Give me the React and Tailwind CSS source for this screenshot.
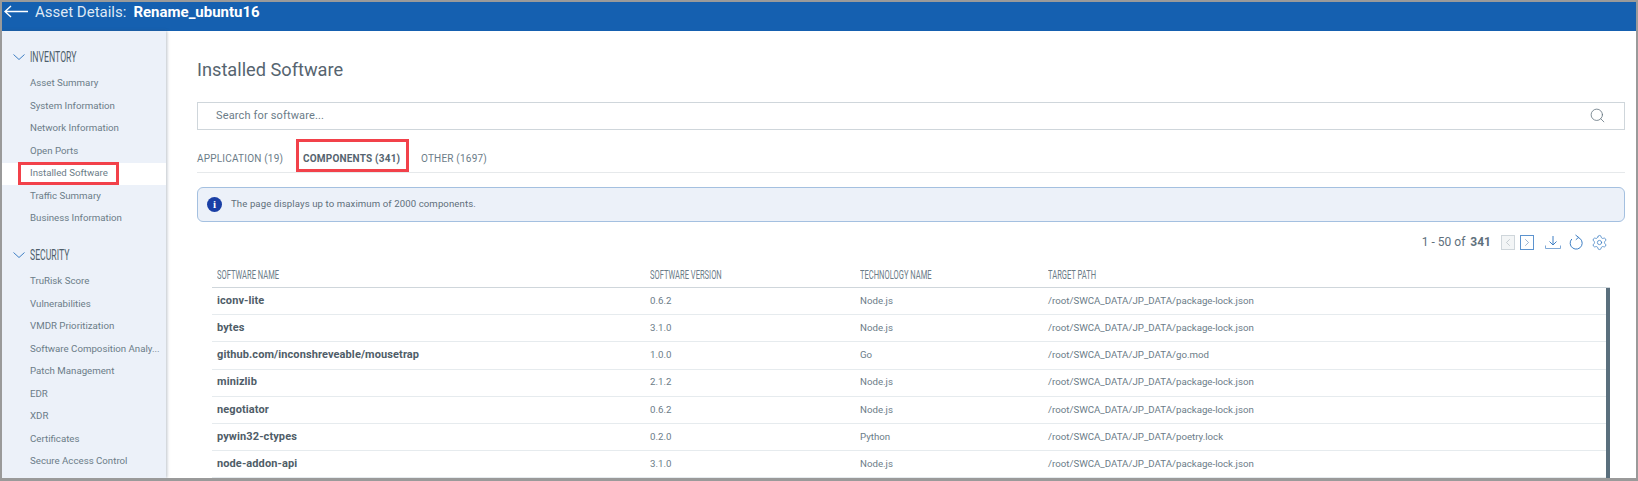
import React from "react";
import { Search, Settings, ChevronLeft, ChevronRight } from "lucide-react";

const inventory = ["Asset Summary","System Information","Network Information","Open Ports","Installed Software","Traffic Summary","Business Information"];
const security = ["TruRisk Score","Vulnerabilities","VMDR Prioritization","Software Composition Analy...","Patch Management","EDR","XDR","Certificates","Secure Access Control"];
const P = "/root/SWCA_DATA/JP_DATA/";
const rows = [
  ["iconv-lite","0.6.2","Node.js",P+"package-lock.json"],
  ["bytes","3.1.0","Node.js",P+"package-lock.json"],
  ["github.com/inconshreveable/mousetrap","1.0.0","Go",P+"go.mod"],
  ["minizlib","2.1.2","Node.js",P+"package-lock.json"],
  ["negotiator","0.6.2","Node.js",P+"package-lock.json"],
  ["pywin32-ctypes","0.2.0","Python",P+"poetry.lock"],
  ["node-addon-api","3.1.0","Node.js",P+"package-lock.json"],
];

function Section({ title, items, className }) {
  return (
    <div className={className}>
      <div className="flex items-center h-[16px] pl-[9px]">
        <svg width="16" height="16" viewBox="0 0 16 16" fill="none" stroke="#3f7fc4" strokeWidth="1"><path d="M2.5 5.5 8 10.5 13.5 5.5" /></svg>
        <span className="ml-[3px] text-[14px] leading-[16px] text-[#4f5f6b] inline-block origin-left scale-x-[0.62] whitespace-nowrap">{title}</span>
      </div>
      <div className="mt-[7.5px]">
        {items.map((t) => (
          <div key={t} className={"relative h-[22.5px] flex items-center pl-[28px] text-[9.7px] text-[#6b7c88] whitespace-nowrap " + (t === "Installed Software" ? "bg-white w-[164px]" : "")}>
            {t}
            {t === "Installed Software" && <div className="absolute left-[16px] -top-[1px] w-[101px] h-[23px] border-[3px] border-[#f2414a]" />}
          </div>
        ))}
      </div>
    </div>
  );
}

const cols = "grid grid-cols-[433px_210px_188px_1fr] pl-[5px]";

export default function App() {
  return (
    <div className="h-[481px] w-[1638px] overflow-hidden bg-white border-t-2 border-l-2 border-r-2 border-b-[3px] border-[#9a9a9a] flex flex-col font-['Roboto',sans-serif]">
      <header className="h-[29px] shrink-0 bg-[#1560b0] flex items-center text-white">
        <svg className="ml-[2px] -mt-[9px]" width="24" height="14" viewBox="0 0 24 14" fill="none" stroke="#fff" strokeWidth="1.4"><path d="M24 6.5H1M7 1 1 6.5 7 12" /></svg>
        <span className="ml-[7px] -mt-[8px] text-[15px] text-[#dfe9f5]">Asset Details:</span>
        <span className="ml-[7px] -mt-[8px] text-[15px] font-bold">Rename_ubuntu16</span>
      </header>
      <div className="flex flex-1 min-h-0">
        <aside className="w-[164px] shrink-0 bg-[#ecf1f9] pt-[18px] shadow-[1px_0_3px_rgba(60,80,100,0.35)] overflow-hidden">
          <Section title="INVENTORY" items={inventory} />
          <Section title="SECURITY" items={security} className="mt-[17px]" />
        </aside>
        <main className="flex-1 min-w-0 pl-[31px] pr-[11px] text-[#6b7c88]">
          <h1 className="mt-[28px] text-[18.2px] leading-[22px] text-[#56646f] font-normal">Installed Software</h1>
          <div className="mt-[21px] h-[28px] border border-[#cfd6db] flex items-center justify-between pl-[18px] pr-[18px]">
            <span className="text-[11px] tracking-[0.15px] text-[#6b7c88] pt-[1px]">Search for software...</span>
            <Search size={17} strokeWidth={1.1} color="#5f707c" className="-mt-[1px]" />
          </div>
          <div className="mt-[10px] h-[33px] border-b border-[#e6e9eb] flex text-[10px] tracking-[0.2px]">
            <div className="pt-[11px] w-[86px] whitespace-nowrap">APPLICATION (19)</div>
            <div className="relative ml-[20px] w-[98px] pt-[11px] font-bold text-[#56646f] whitespace-nowrap">
              COMPONENTS (341)
              <div className="absolute left-0 right-0 bottom-[1px] h-[2px] bg-[#1b4b99]" />
              <div className="absolute -left-[7px] -top-[1px] w-[113px] h-[33px] border-[3px] border-[#f2414a]" />
            </div>
            <div className="ml-[20px] pt-[11px] whitespace-nowrap">OTHER (1697)</div>
          </div>
          <div className="mt-[14px] h-[35px] rounded-[6px] border border-[#a4c0e0] bg-[#ecf1f9] flex items-center pl-[9px] text-[9.6px] tracking-[0.1px] text-[#5f6f7b]">
            <span className="w-[15px] h-[15px] rounded-full bg-[#1a3fa5] text-white text-[11px] font-bold flex items-center justify-center font-['Liberation_Serif',serif]">i</span>
            <span className="ml-[9px]">The page displays up to maximum of 2000 components.</span>
          </div>
          <div className="mt-[11px] h-[18px] flex items-center justify-end pr-[17px] text-[12px] text-[#5f707c]">
            <span>1 - 50 of</span>
            <span className="ml-[5px] font-bold">341</span>
            <span className="ml-[10px] w-[14px] h-[15px] border-[1.5px] border-[#cfd6db] bg-[#f3f5f6] flex items-center justify-center"><ChevronLeft size={13} strokeWidth={1} color="#9aa6ae" /></span>
            <span className="ml-[5px] w-[14px] h-[15px] border-[1.5px] border-[#5c93cf] flex items-center justify-center"><ChevronRight size={13} strokeWidth={1} color="#3f6fa8" /></span>
            <svg className="ml-[11px]" width="16" height="15" viewBox="0 0 16 15" fill="none" stroke="#3f7fc4" strokeWidth="1"><path d="M8 1V10M4.5 6.5 8 10l3.5-3.5" /><path d="M.5 10.5v3h15v-3" stroke="#7fa8d6" /></svg>
            <svg className="ml-[8px]" width="14" height="16" viewBox="0 0 14 16" fill="none" stroke="#3f7fc4" strokeWidth="1"><path d="M9 3.4A6 6 0 1 1 2.8 5" /><path d="M6.5 1 9.5 3.3 6.8 5.8" /></svg>
            <Settings className="ml-[8px]" size={17} strokeWidth={1.1} color="#3f7fc4" />
          </div>
          <div className="relative mt-[10px] ml-[15px] mr-[15px]">
            <div className={cols + " h-[27px] items-center border-b border-[#cfd6db] text-[#6b7c88] pt-[2px]"}>
              {["SOFTWARE NAME","SOFTWARE VERSION","TECHNOLOGY NAME","TARGET PATH"].map((h) => (
                <div key={h} className="text-[12px] origin-left scale-x-[0.63] whitespace-nowrap">{h}</div>
              ))}
            </div>
            {rows.map((r) => (
              <div key={r[0] + r[1]} className={cols + " h-[27.2px] items-center border-b border-[#e6ebee] text-[9.7px]"}>
                <div className="text-[11px] font-bold text-[#4f5d68] tracking-[0.1px]">{r[0]}</div>
                <div>{r[1]}</div>
                <div>{r[2]}</div>
                <div>{r[3]}</div>
              </div>
            ))}
            <div className="absolute right-0 top-[27px] w-[4px] h-[190px] bg-[#5a6f7d]" />
          </div>
        </main>
      </div>
    </div>
  );
}
